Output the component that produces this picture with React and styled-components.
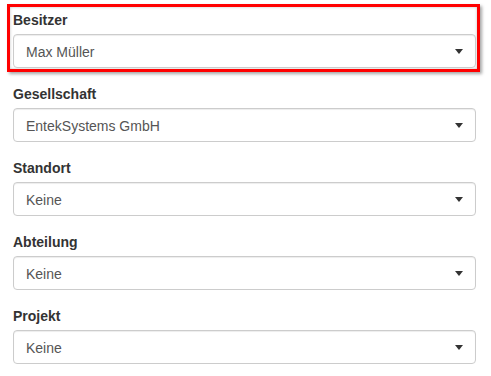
import React from 'react';
import styled, { createGlobalStyle } from 'styled-components';

const GlobalStyle = createGlobalStyle`
  html, body {
    margin: 0;
    padding: 0;
    background: #fff;
  }
  body {
    font-family: "Liberation Sans", Arial, sans-serif;
    font-size: 14px;
    line-height: 20px;
    color: #333;
  }
`;

const Form = styled.div`
  padding: 9px 15px 0 13px;
  display: flex;
  flex-direction: column;
`;

const Group = styled.div`
  display: flex;
  flex-direction: column;
  margin-bottom: ${props => (props.last ? 0 : 15)}px;
`;

const Highlight = styled.div`
  margin: -5px -4px 11px -6px;
  padding: 2px 1px 1px 3px;
  border: 3px solid #ff0000;
  box-shadow: 2px 2px 3px rgba(0, 0, 0, 0.35), inset 0 0 3px rgba(0, 0, 0, 0.25);
`;

const Label = styled.label`
  font-weight: bold;
  color: #333;
  padding-top: 1px;
  margin-bottom: 4px;
  line-height: 20px;
`;

const Select = styled.div`
  position: relative;
  box-sizing: border-box;
  height: 34px;
  padding: 7px 32px 5px 12px;
  border: 1px solid #ccc;
  border-radius: 4px;
  background: #fff;
  color: #555;
  line-height: 20px;
  box-shadow: inset 0 1px 1px rgba(0, 0, 0, 0.075);
`;

const Caret = styled.span`
  position: absolute;
  right: 12px;
  top: 50%;
  margin-top: -2px;
  width: 0;
  height: 0;
  border-style: solid;
  border-width: 5px 4px 0 4px;
  border-color: #333 transparent transparent transparent;
`;

const fields = [
  { label: 'Besitzer', value: 'Max Müller', marked: true },
  { label: 'Gesellschaft', value: 'EntekSystems GmbH' },
  { label: 'Standort', value: 'Keine' },
  { label: 'Abteilung', value: 'Keine' },
  { label: 'Projekt', value: 'Keine' },
];

const Field = ({ label, value, last }) => (
  <Group last={last}>
    <Label>{label}</Label>
    <Select>
      {value}
      <Caret />
    </Select>
  </Group>
);

const App = () => (
  <>
    <GlobalStyle />
    <Form>
      {fields.map((f, i) =>
        f.marked ? (
          <Highlight key={f.label}>
            <Field label={f.label} value={f.value} last />
          </Highlight>
        ) : (
          <Field key={f.label} label={f.label} value={f.value} last={i === fields.length - 1} />
        )
      )}
    </Form>
  </>
);

export default App;
